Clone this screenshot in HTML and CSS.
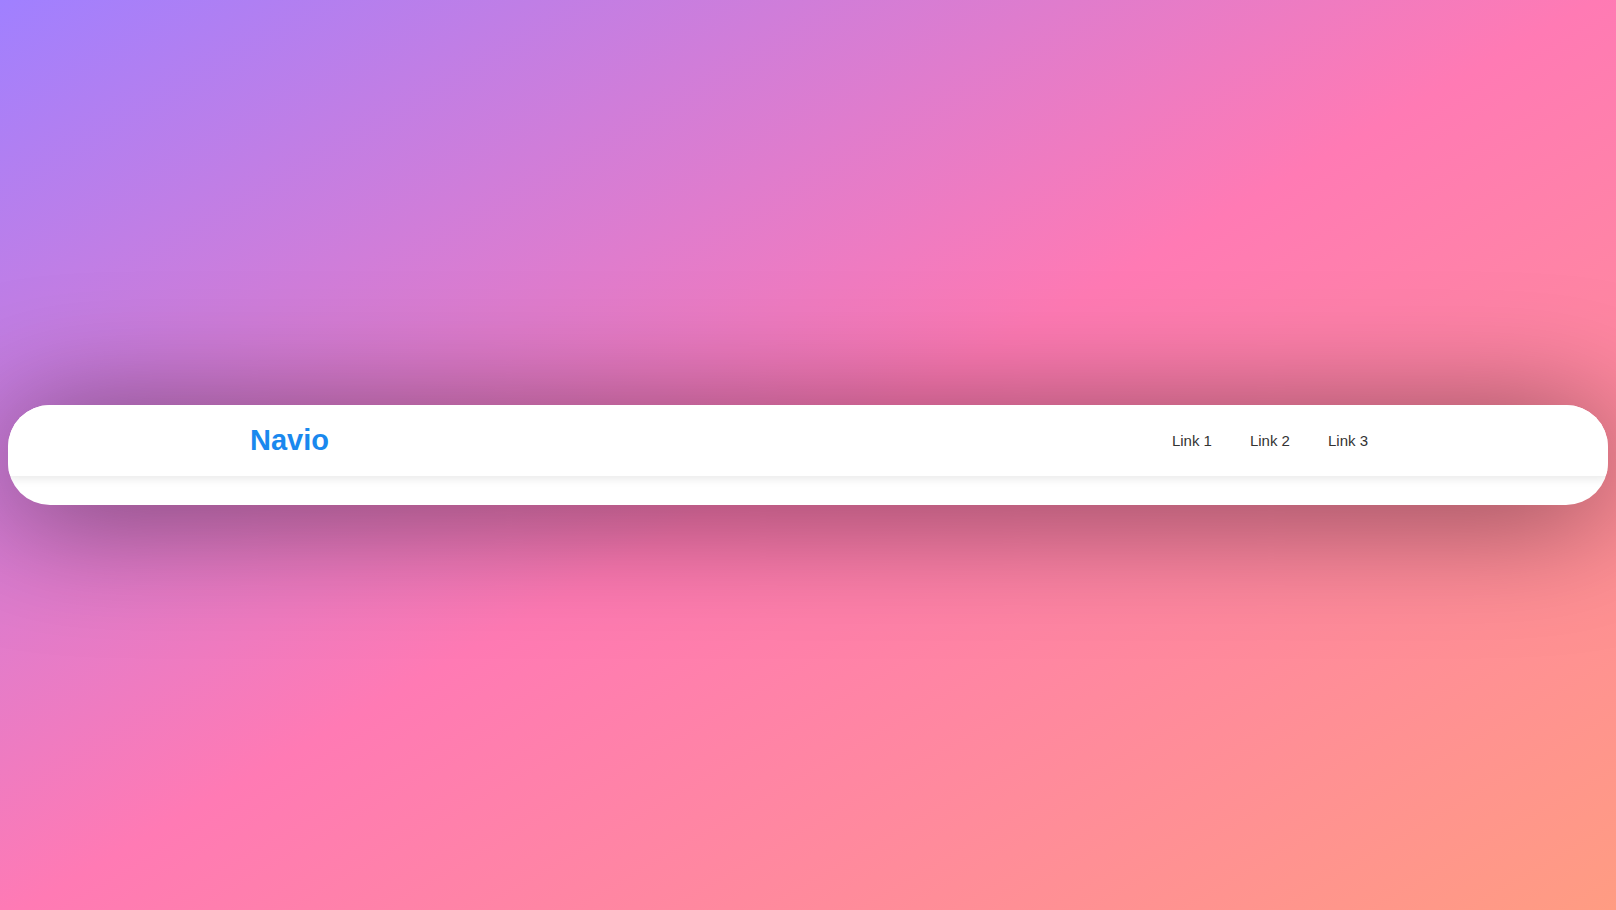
FILE: index.html
```html
<!DOCTYPE html>
<html lang="en">
<head>
<meta charset="utf-8">
<title>Navio</title>
<link rel="stylesheet" href="styles.css">
</head>
<body>
  <div class="card">
    <nav class="navbar">
      <a class="brand" href="#">Navio</a>
      <ul class="links">
        <li><a href="#">Link 1</a></li>
        <li><a href="#">Link 2</a></li>
        <li><a href="#">Link 3</a></li>
      </ul>
    </nav>
  </div>
</body>
</html>
```
FILE: styles.css
```css
* { box-sizing: border-box; }
html, body { height: 100%; }
body {
  margin: 0;
  padding: 0 8px;
  display: flex;
  align-items: center;
  font-family: "Liberation Sans", Arial, sans-serif;
  background: linear-gradient(150deg, #a080ff 0%, #ff7ab4 50%, #ff9c82 100%);
}
.card {
  width: 100%;
  height: 100px;
  background: #fff;
  border-radius: 42px;
  overflow: hidden;
  box-shadow: 0 10px 120px rgba(0, 0, 0, 0.5);
}
.navbar {
  height: 71px;
  padding: 0 15%;
  display: flex;
  align-items: center;
  justify-content: space-between;
  background: #fff;
  box-shadow: 0 2px 10px rgba(0, 0, 0, 0.1);
}
.brand {
  font-size: 29px;
  font-weight: bold;
  color: #1a88ee;
  text-decoration: none;
  padding-left: 2px;
}
.links {
  list-style: none;
  margin: 0;
  padding: 0;
  display: flex;
  gap: 38px;
}
.links a {
  font-size: 15px;
  color: #333;
  text-decoration: none;
}
```
